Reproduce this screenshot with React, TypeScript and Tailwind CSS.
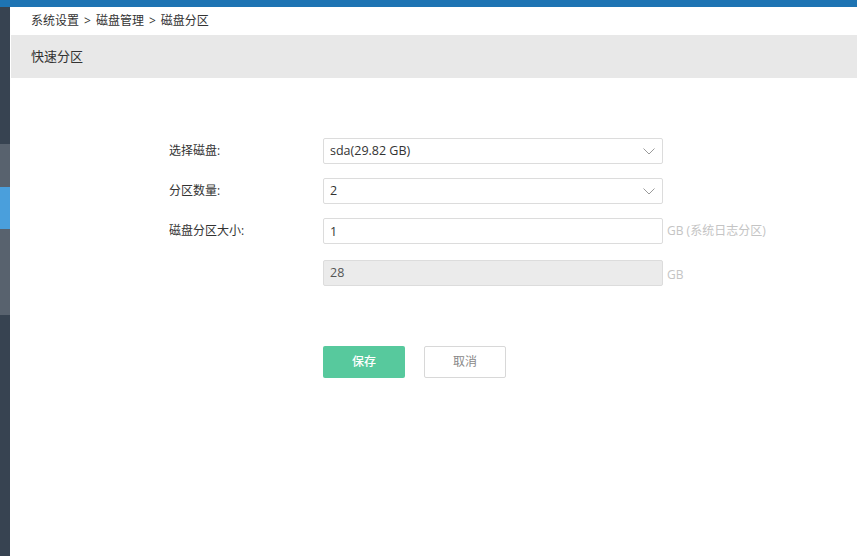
import { useState } from 'react';

const font = { fontFamily: '"Open Sans", "Noto Sans CJK SC", sans-serif' };

function Chevron() {
    return (
        <svg width="12" height="7" viewBox="0 0 12 7" className="absolute right-[7px] top-[9px]">
            <path d="M0.5 0.5 L6 6 L11.5 0.5" fill="none" stroke="#9a9a9a" strokeWidth="1" />
        </svg>
    );
}

function Row({ label, children, className = '' }: { label?: string; children: React.ReactNode; className?: string }) {
    return (
        <div className={`flex items-center ${className}`}>
            <div className="w-[154px] text-[12px] text-[#333]">{label}</div>
            {children}
        </div>
    );
}

export default function App() {
    const [disk] = useState('sda(29.82 GB)');
    const [count] = useState('2');
    const [size, setSize] = useState('1');

    return (
        <div className="w-[857px] h-[556px] bg-white overflow-hidden flex flex-col" style={font}>
            <div className="h-[7px] bg-[#1e74b3] shrink-0" />
            <div className="flex flex-1">
                <div className="w-[10px] flex flex-col">
                    <div className="h-[137px] bg-[#374351]" />
                    <div className="h-[43px] bg-[#58626e]" />
                    <div className="h-[42px] bg-[#4a9fdc]" />
                    <div className="h-[86px] bg-[#58626e]" />
                    <div className="flex-1 bg-[#374351]" />
                </div>
                <div className="flex-1 ml-[1px] flex flex-col">
                    <div className="h-[28px] flex items-center pl-[20px] text-[12px] text-[#333]">
                        系统设置<span className="mx-[5px]">&gt;</span>磁盘管理<span className="mx-[5px]">&gt;</span>磁盘分区
                    </div>
                    <div className="h-[43px] bg-[#e8e8e8] flex items-center pl-[20px] text-[13px] text-[#333]">
                        快速分区
                    </div>

                    <div className="pl-[158px] pt-[60px]">
                        <Row label="选择磁盘:">
                            <div className="relative w-[340px] h-[26px] border border-[#dcdcdc] rounded-[2px] bg-white flex items-center px-[6px] text-[12.5px] text-[#333]">
                                {disk}
                                <Chevron />
                            </div>
                        </Row>
                        <Row label="分区数量:" className="mt-[14px]">
                            <div className="relative w-[340px] h-[26px] border border-[#dcdcdc] rounded-[2px] bg-white flex items-center px-[6px] text-[12.5px] text-[#333]">
                                {count}
                                <Chevron />
                            </div>
                        </Row>
                        <Row label="磁盘分区大小:" className="mt-[14px]">
                            <input
                                value={size}
                                onChange={(e) => setSize(e.target.value)}
                                className="w-[340px] h-[26px] border border-[#dcdcdc] rounded-[2px] px-[6px] text-[12.5px] text-[#333] outline-none"
                            />
                            <span className="ml-[4px] text-[12px] text-[#c4c4c4]">GB (系统日志分区)</span>
                        </Row>
                        <Row className="mt-[16px]">
                            <div className="w-[340px] h-[26px] border border-[#dcdcdc] rounded-[2px] bg-[#ebebeb] flex items-center px-[6px] text-[12.5px] text-[#555]">
                                28
                            </div>
                            <span className="ml-[4px] mt-[4px] text-[12px] text-[#c4c4c4]">GB</span>
                        </Row>

                        <div className="flex gap-[19px] mt-[60px] ml-[154px]">
                            <button className="w-[82px] h-[32px] rounded-[2px] bg-[#57c99d] text-white text-[12px] font-medium">
                                保存
                            </button>
                            <button className="w-[82px] h-[32px] rounded-[2px] border border-[#d8d8d8] bg-white text-[#888] text-[12px]">
                                取消
                            </button>
                        </div>
                    </div>
                </div>
            </div>
        </div>
    );
}
